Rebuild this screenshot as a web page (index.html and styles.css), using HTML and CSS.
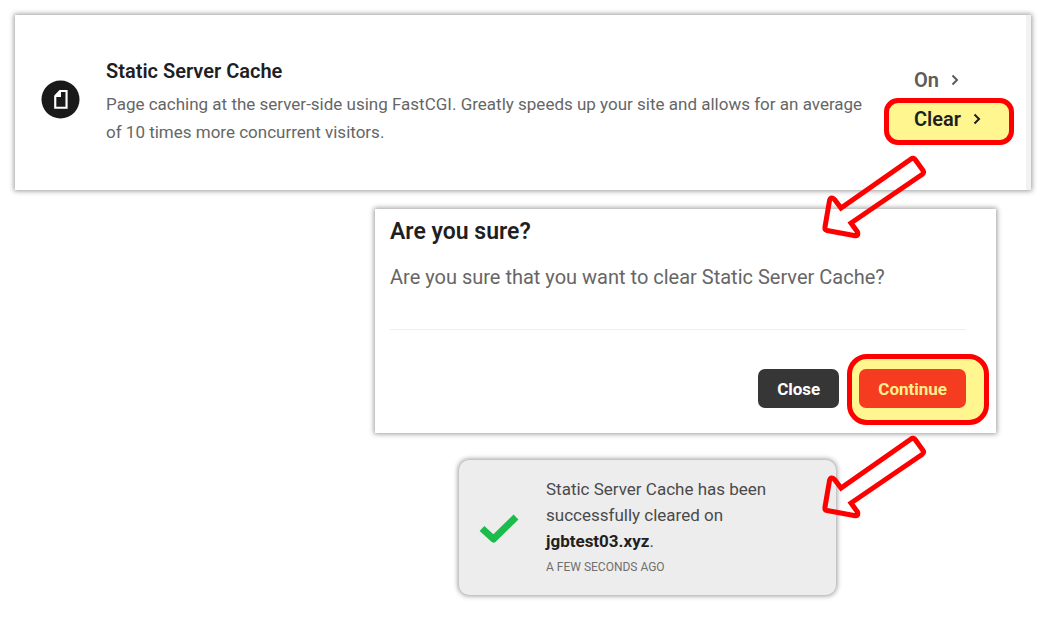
FILE: index.html
```html
<!DOCTYPE html>
<html lang="en">
<head>
<meta charset="utf-8">
<title>Static Server Cache</title>
<link rel="stylesheet" href="styles.css">
</head>
<body>
<main class="page">
  <section class="card setting">
    <svg class="setting-icon" viewBox="0 0 40 40" aria-hidden="true">
      <circle cx="20" cy="20" r="19.5" fill="#1a1a1a"/>
      <path d="M14.600 28.500V16.500L19.500 11.300H26.200V28.500Z" fill="none" stroke="#fff" stroke-width="2.200"/>
      <path d="M20.500 11V17.500H14.500V15.500L19 11Z" fill="#fff"/>
    </svg>
    <div class="setting-text">
      <h2 class="setting-title">Static Server Cache</h2>
      <p class="setting-desc">Page caching at the server-side using FastCGI. Greatly speeds up your site and allows for an average of 10 times more concurrent visitors.</p>
    </div>
    <div class="setting-actions">
      <button type="button" class="action">On
        <svg class="chevron" viewBox="0 0 8 12" aria-hidden="true"><path d="M1.5 1.5L6 6L1.5 10.5"/></svg>
      </button>
      <button type="button" class="action action-marked">Clear
        <svg class="chevron" viewBox="0 0 8 12" aria-hidden="true"><path d="M1.5 1.5L6 6L1.5 10.5"/></svg>
      </button>
    </div>
  </section>

  <section class="card dialog" role="dialog" aria-labelledby="dialog-title">
    <h2 class="dialog-title" id="dialog-title">Are you sure?</h2>
    <p class="dialog-text">Are you sure that you want to clear Static Server Cache?</p>
    <div class="dialog-actions">
      <button type="button" class="button button-dark">Close</button>
      <span class="marked"><button type="button" class="button button-red">Continue</button></span>
    </div>
    <svg class="arrow arrow-dialog" viewBox="0 0 110 90" aria-hidden="true"><path d="M91 9Q93.500 7 95.500 10L103 20.500Q104.500 22.500 102 24.500L31 73L37.500 82Q39 86.500 34 85.500L7 80.500Q4.500 80 5 77L9.500 50.500Q11 46 14.500 49.500L21 58Z"/></svg>
  </section>

  <section class="card toast" role="status">
    <svg class="check" viewBox="0 0 40 30" aria-hidden="true"><path d="M3 15.500L14.500 26L37 4"/></svg>
    <div>
      <p class="toast-text">Static Server Cache has been successfully cleared on <strong>jgbtest03.xyz</strong>.</p>
      <p class="toast-time">A FEW SECONDS AGO</p>
    </div>
    <svg class="arrow arrow-toast" viewBox="0 0 110 90" aria-hidden="true"><path d="M91 9Q93.500 7 95.500 10L103 20.500Q104.500 22.500 102 24.500L31 73L37.500 82Q39 86.500 34 85.500L7 80.500Q4.500 80 5 77L9.500 50.500Q11 46 14.500 49.500L21 58Z"/></svg>
  </section>
</main>
</body>
</html>
```
FILE: styles.css
```css
* { box-sizing: border-box; }
body {
  margin: 0;
  background: #fff;
  color: #1f1f1f;
  font-family: Roboto, "Liberation Sans", sans-serif;
}
h2, p { margin: 0; }
button {
  border: 0;
  background: none;
  font: inherit;
  cursor: pointer;
}
.page {
  display: flex;
  flex-direction: column;
  gap: 19px;
  padding: 15px 19px 27px 15px;
}
.card {
  position: relative;
  background: #fff;
  box-shadow: 0 0 5px 1px rgba(0, 0, 0, 0.4);
}
.setting {
  display: flex;
  align-items: center;
  padding: 42px 12px 44px 26px;
  border-right: 5px solid #f2f2f2;
}
.setting-icon {
  flex: none;
  width: 39px;
  height: 39px;
  margin-right: 26px;
  margin-bottom: 5px;
}
.setting-text {
  flex: 1;
  padding-right: 8px;
}
.setting-title {
  font-size: 20px;
  line-height: 28px;
  font-weight: 600;
  margin-bottom: 5px;
}
.setting-desc {
  color: #666;
  font-size: 17px;
  line-height: 28px;
}
.setting-actions {
  flex: none;
  width: 130px;
  padding-top: 4px;
}
.action {
  display: flex;
  align-items: center;
  gap: 12px;
  width: 100%;
  height: 36px;
  padding: 0 30px;
  color: #5c5c5c;
  font-size: 20px;
  font-weight: 600;
}
.action-marked {
  height: 47px;
  padding: 0 25px 5px;
  border: 5px solid #f00;
  border-radius: 14px;
  background: #fff68f;
  color: #1f1f1f;
}
.chevron {
  width: 8px;
  height: 12px;
  fill: none;
  stroke: currentColor;
  stroke-width: 2;
}
.dialog {
  width: 621px;
  max-width: 100%;
  margin-left: auto;
  margin-right: 35px;
  padding: 7px 30px 25px 15px;
}
.dialog-title {
  font-size: 23px;
  line-height: 32px;
  font-weight: 600;
}
.dialog-text {
  padding: 13px 0 36px;
  border-bottom: 1px solid #eee;
  color: #666;
  font-size: 20px;
  line-height: 32px;
}
.dialog-actions {
  display: flex;
  justify-content: flex-end;
  gap: 20px;
  padding-top: 39px;
}
.button {
  height: 39px;
  padding: 0 19px;
  border-radius: 7px;
  font-size: 17px;
  font-weight: 700;
}
.button-dark {
  background: #363636;
  color: #fff;
}
.button-red {
  position: relative;
  background: #f53b20;
  color: #fff08a;
}
.marked { position: relative; }
.marked::before {
  content: "";
  position: absolute;
  inset: -15px -23px -17px -12px;
  border: 5px solid #f00;
  border-radius: 20px;
  background: #fff68f;
}
.toast {
  display: flex;
  align-items: center;
  gap: 27px;
  width: 377px;
  max-width: 100%;
  margin-top: 8px;
  margin-left: auto;
  margin-right: 195px;
  padding: 16px 40px 15px 20px;
  border-radius: 10px;
  background: #ededed;
}
.check {
  flex: none;
  width: 40px;
  height: 30px;
  fill: none;
  stroke: #1dbb4c;
  stroke-width: 7;
  stroke-linejoin: round;
}
.toast-text {
  color: #4a4a4a;
  font-size: 17px;
  line-height: 26px;
}
.toast-text strong { color: #1f1f1f; }
.toast-time {
  color: #707070;
  font-size: 12px;
  line-height: 26px;
}
.arrow {
  position: absolute;
  width: 110px;
  height: 90px;
  fill: none;
  stroke: #f00;
  stroke-width: 5;
  pointer-events: none;
}
.arrow-dialog {
  top: -59px;
  right: 66px;
}
.arrow-toast {
  top: -30px;
  right: -94px;
}
```
